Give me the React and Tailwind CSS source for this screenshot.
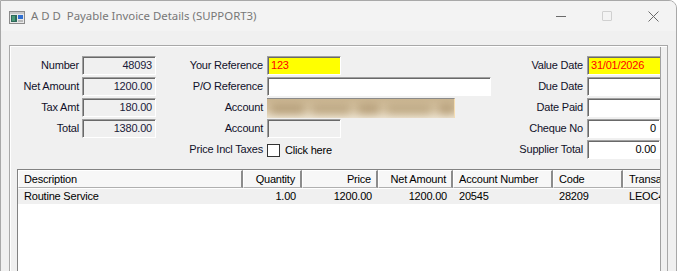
import React from 'react';

const sunken =
  'border border-t-[#a0a0a0] border-l-[#a0a0a0] border-b-white border-r-white shadow-[inset_1px_1px_0_#696969] h-[19px] flex items-center px-[3px] overflow-hidden whitespace-nowrap';

const Field = ({ value = '', tone = 'white', align = 'left', w = 'w-[74px]' }) => {
  const bg =
    tone === 'yellow'
      ? 'bg-[#ffff00] text-[#ff0000]'
      : tone === 'grey'
      ? 'bg-[#f0f0f0] text-[#1a1a3a]'
      : 'bg-white text-black';
  return (
    <div className={`${sunken} ${bg} ${w} ${align === 'right' ? 'justify-end' : 'justify-start'}`}>
      {value}
    </div>
  );
};

const Label = ({ children }) => (
  <div className="h-[21px] flex items-center justify-end whitespace-nowrap text-[#10102a]">{children}</div>
);

const Cell = ({ children, className = '' }) => (
  <div className={`h-[21px] flex items-center ${className}`}>{children}</div>
);

const columns = [
  { name: 'Description', w: 'w-[225px]', align: 'left' },
  { name: 'Quantity', w: 'w-[59px]', align: 'right' },
  { name: 'Price', w: 'w-[76px]', align: 'right' },
  { name: 'Net Amount', w: 'w-[75px]', align: 'right' },
  { name: 'Account Number', w: 'w-[100px]', align: 'left' },
  { name: 'Code', w: 'w-[70px]', align: 'left' },
  { name: 'Transaction', w: 'w-[100px]', align: 'left' },
];

const row = ['Routine Service', '1.00', '1200.00', '1200.00', '20545', '28209', 'LEOC4521'];

const AppIcon = () => (
  <svg width="16" height="13" viewBox="0 0 16 13">
    <rect x="0.5" y="0.5" width="15" height="12" fill="#e8e8e8" stroke="#8a8a8a" />
    <rect x="1" y="1" width="14" height="2" fill="#c8c8c8" />
    <rect x="2" y="4" width="6" height="7" fill="#2f6a5a" />
    <rect x="3" y="5" width="3" height="5" fill="#4a9a78" />
    <rect x="9" y="4" width="5" height="4" fill="#2f6fd0" />
    <rect x="9" y="9" width="5" height="2" fill="#b9b9b9" />
  </svg>
);

export default function App() {
  return (
    <div className="w-[677px] h-[271px] overflow-hidden bg-white">
      <div
        className="w-[677px] h-[290px] border border-[#a8a8a8] rounded-tr-[8px] bg-[#f0f0f0] overflow-hidden flex flex-col"
        style={{ fontFamily: '"Liberation Sans", Arial, sans-serif' }}
      >
        {/* title bar */}
        <div className="h-[30px] bg-[#f3f3f3] flex items-center shrink-0">
          <div className="ml-[8px] mt-[2px] flex items-center">
            <AppIcon />
          </div>
          <div
            className="ml-[6px] text-[11.4px] text-[#777777] whitespace-nowrap"
            style={{ fontFamily: '"Noto Sans", "Open Sans", sans-serif' }}
          >
            A D D&nbsp; Payable Invoice Details (SUPPORT3)
          </div>
          <div className="ml-auto flex items-center h-full">
            <div className="w-[46px] h-full flex items-center justify-center">
              <div className="w-[10px] h-px bg-[#6a6a6a]" />
            </div>
            <div className="w-[46px] h-full flex items-center justify-center">
              <div className="w-[10px] h-[10px] border border-[#d0d0d0] rounded-[1px]" />
            </div>
            <div className="w-[46px] h-full flex items-center justify-center">
              <svg width="11" height="11" viewBox="0 0 11 11">
                <path d="M0.5 0.5 L10.5 10.5 M10.5 0.5 L0.5 10.5" stroke="#6a6a6a" strokeWidth="1" />
              </svg>
            </div>
          </div>
        </div>

        {/* body */}
        <div className="flex-1 px-[8px] pt-[14px]">
          <div className="h-full border-t border-l border-r border-[#a8a8a8] shadow-[inset_1px_1px_0_#ffffff]">
            <div className="h-full w-[650px] ml-[1px] mt-[1px] border-r border-[#a0a0a0] overflow-hidden text-[11px] tracking-[-0.2px] text-black">
              {/* form */}
              <div className="flex items-start pt-[8px]">
                {/* column 1 */}
                <div className="grid grid-cols-[68px_74px] gap-x-[3px] content-start w-[145px]">
                  <Label>Number</Label>
                  <Cell><Field tone="grey" align="right" value="48093" /></Cell>
                  <Label>Net Amount</Label>
                  <Cell><Field tone="grey" align="right" value="1200.00" /></Cell>
                  <Label>Tax Amt</Label>
                  <Cell><Field tone="grey" align="right" value="180.00" /></Cell>
                  <Label>Total</Label>
                  <Cell><Field tone="grey" align="right" value="1380.00" /></Cell>
                </div>

                {/* column 2 */}
                <div className="grid grid-cols-[107px_auto] gap-x-[4px] content-start">
                  <Label>Your Reference</Label>
                  <Cell><Field tone="yellow" value="123" /></Cell>
                  <Label>P/O Reference</Label>
                  <Cell><Field w="w-[224px]" /></Cell>
                  <Label>Account</Label>
                  <Cell>
                    <div className="w-[188px] h-[20px] relative overflow-hidden border-t border-[#8a8a8a] border-r border-r-[#f4dcb0] bg-linear-to-b from-[#cbb692] via-[#d6c3a2] to-[#ece2cf]">
                      <div className="flex items-center gap-[8px] h-full pl-[4px] blur-[4px]">
                        <div className="w-[34px] h-[9px] bg-[#b49d78]" />
                        <div className="w-[40px] h-[9px] bg-[#bba682]" />
                        <div className="w-[22px] h-[9px] bg-[#b49d78]" />
                        <div className="w-[46px] h-[9px] bg-[#bda884]" />
                        <div className="w-[16px] h-[9px] bg-[#b39c77]" />
                      </div>
                    </div>
                  </Cell>
                  <Label>Account</Label>
                  <Cell><Field tone="grey" /></Cell>
                  <Label>Price Incl Taxes</Label>
                  <Cell>
                    <div className="w-[13px] h-[13px] bg-white border border-[#333333] mt-[2px]" />
                    <span className="ml-[5px] mt-[2px]">Click here</span>
                  </Cell>
                </div>

                {/* column 3 */}
                <div className="ml-auto grid grid-cols-[auto_76px] gap-x-[4px] content-start -mr-[3px]">
                  <Label>Value Date</Label>
                  <Cell><Field tone="yellow" w="w-[76px]" value="31/01/2026" /></Cell>
                  <Label>Due Date</Label>
                  <Cell><Field w="w-[76px]" /></Cell>
                  <Label>Date Paid</Label>
                  <Cell><Field w="w-[76px]" /></Cell>
                  <Label>Cheque No</Label>
                  <Cell><div className="pr-[3px]"><Field w="w-[73px]" align="right" value="0" /></div></Cell>
                  <Label>Supplier Total</Label>
                  <Cell><div className="pr-[3px]"><Field w="w-[73px]" align="right" value="0.00" /></div></Cell>
                </div>
              </div>

              {/* list */}
              <div className="ml-[6px] mt-[9px] w-[700px] h-[120px] border border-[#828282] bg-white">
                <div className="flex h-[18px]">
                  {columns.map((c) => (
                    <div
                      key={c.name}
                      className={`${c.w} shrink-0 h-full flex items-center px-[5px] whitespace-nowrap bg-[#f7f7f7] border-t border-l border-t-white border-l-white border-r-2 border-b border-r-[#8c8c8c] border-b-[#b0b0b0] ${
                        c.align === 'right' ? 'justify-end' : 'justify-start'
                      }`}
                    >
                      {c.name}
                    </div>
                  ))}
                </div>
                <div className="flex h-[15px] mt-[1px] bg-[#f0f0f0]">
                  {columns.map((c, i) => (
                    <div
                      key={c.name}
                      className={`${c.w} shrink-0 h-full flex items-center px-[6px] whitespace-nowrap ${
                        c.align === 'right' ? 'justify-end' : 'justify-start'
                      }`}
                    >
                      {row[i]}
                    </div>
                  ))}
                </div>
              </div>
            </div>
          </div>
        </div>
      </div>
    </div>
  );
}
